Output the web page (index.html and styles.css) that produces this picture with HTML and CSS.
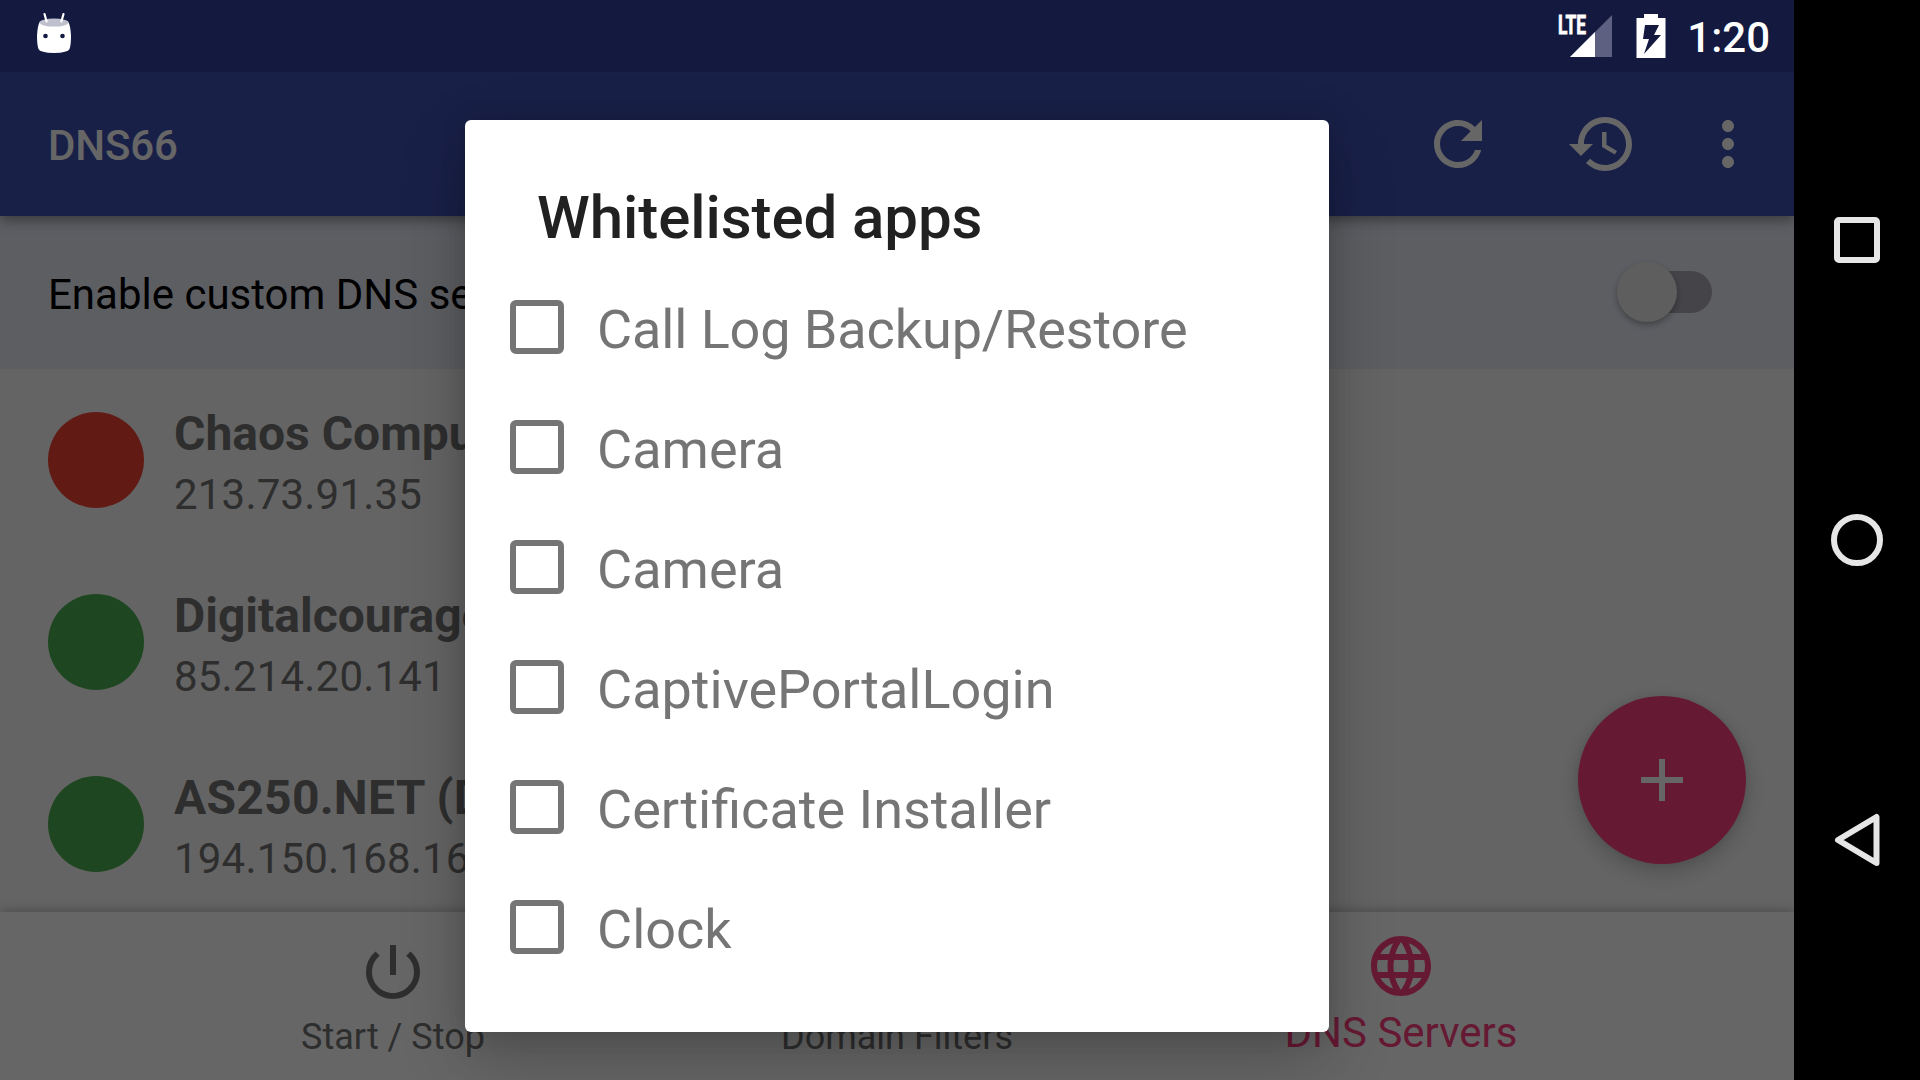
FILE: index.html
```html
<!DOCTYPE html>
<html lang="en">
<head>
<meta charset="utf-8">
<title>DNS66</title>
<link rel="stylesheet" href="styles.css">
</head>
<body>
<div class="device">
  <div class="app">
    <header class="status">
      <svg class="status-head" viewBox="0 0 36 42" width="36" height="42">
        <path d="M4 9.500Q1.500 13 1 24Q1 33 2.500 37Q4 40.700 18 41Q32 40.700 33.500 37Q35 33 35 24Q34.500 13 32 9.500Z" fill="#fff"/>
        <ellipse cx="18" cy="10.600" rx="14.500" ry="4" fill="#bfc0ce"/>
        <path d="M8.500 2L10.600 9.500M27.500 2L25.400 9.500" stroke="#fff" stroke-width="2.200" stroke-linecap="round"/>
        <circle cx="9.500" cy="24" r="2.300" fill="#131940"/>
        <circle cx="26.500" cy="24" r="2.300" fill="#131940"/>
      </svg>
      <div class="status-right">
        <svg class="signal" viewBox="0 0 56 44" width="56" height="44">
          <path d="M54 1V43H12Z" fill="#5d6080"/>
          <path d="M37 18V43H12Z" fill="#fff"/>
          <text class="lte" x="0" y="19.500" textLength="28" lengthAdjust="spacingAndGlyphs">LTE</text>
        </svg>
        <svg class="battery" viewBox="0 0 30 44" width="30" height="44">
          <path fill="#fff" fill-rule="evenodd" d="M8 0H22V4H29.500V44H.500V4H8ZM9 11L7 25H13L8 40L25 21H18L23 11Z"/>
        </svg>
        <span class="clock">1:20</span>
      </div>
    </header>
    <div class="toolbar">
      <h1 class="toolbar-title">DNS66</h1>
      <div class="actions">
        <span class="action"><svg viewBox="0 0 24 24" class="icon"><path d="M17.650 6.350A7.958 7.958 0 0 0 12 4c-4.420 0-7.990 3.580-7.990 8s3.570 8 7.990 8c3.730 0 6.840-2.550 7.730-6h-2.080A5.990 5.990 0 0 1 12 18c-3.310 0-6-2.690-6-6s2.690-6 6-6c1.660 0 3.140.69 4.220 1.780L13 11h7V4l-2.350 2.350z"/></svg></span>
        <span class="action"><svg viewBox="0 0 24 24" class="icon"><path d="M13 3c-4.970 0-9 4.030-9 9H1l3.890 3.890.07.14L9 12H6c0-3.870 3.130-7 7-7s7 3.130 7 7-3.130 7-7 7c-1.930 0-3.680-.79-4.940-2.060l-1.420 1.420A8.954 8.954 0 0 0 13 21c4.970 0 9-4.030 9-9s-4.030-9-9-9zm-1 5v5l4.280 2.540.72-1.210-3.500-2.080V8H12z"/></svg></span>
        <span class="action action-more"><svg viewBox="0 0 24 24" class="icon"><path d="M12 8c1.100 0 2-.9 2-2s-.9-2-2-2-2 .9-2 2 .9 2 2 2zm0 2c-1.100 0-2 .9-2 2s.9 2 2 2 2-.9 2-2-.9-2-2-2zm0 6c-1.100 0-2 .9-2 2s.9 2 2 2 2-.9 2-2-.9-2-2-2z"/></svg></span>
      </div>
    </div>
    <div class="setting">
      <span class="setting-label">Enable custom DNS servers</span>
      <span class="switch"><span class="thumb"></span></span>
    </div>
    <ul class="servers">
      <li class="server"><span class="dot dot-off"></span><div class="server-text"><div class="server-name">Chaos Computer Club</div><div class="server-ip">213.73.91.35</div></div></li>
      <li class="server"><span class="dot"></span><div class="server-text"><div class="server-name">Digitalcourage</div><div class="server-ip">85.214.20.141</div></div></li>
      <li class="server"><span class="dot"></span><div class="server-text"><div class="server-name name-loose">AS250.NET (DE)</div><div class="server-ip">194.150.168.168</div></div></li>
    </ul>
    <button class="fab" type="button"><svg viewBox="0 0 24 24" class="icon"><path d="M19 13h-6v6h-2v-6H5v-2h6V5h2v6h6v2z"/></svg></button>
    <nav class="tabs">
      <div class="tab"><svg viewBox="0 0 24 24" class="icon"><path d="M13 3h-2v10h2V3zm4.830 2.170l-1.420 1.420A6.920 6.920 0 0 1 19 12c0 3.870-3.130 7-7 7s-7-3.130-7-7c0-2.190 1.010-4.140 2.580-5.420L6.170 5.170A8.932 8.932 0 0 0 3 12c0 4.970 4.030 9 9 9s9-4.030 9-9c0-2.740-1.230-5.180-3.170-6.830z"/></svg><span class="tab-label">Start / Stop</span></div>
      <div class="tab"><svg viewBox="0 0 24 24" class="icon"><path d="M3 18h6v-2H3v2zM3 6v2h18V6H3zm0 7h12v-2H3v2z"/></svg><span class="tab-label">Domain Filters</span></div>
      <div class="tab tab-active"><svg viewBox="0 0 24 24" class="icon"><path d="M11.990 2C6.470 2 2 6.480 2 12s4.470 10 9.990 10C17.520 22 22 17.520 22 12S17.520 2 11.990 2zm6.930 6h-2.950c-.32-1.250-.78-2.450-1.380-3.560 1.840.63 3.370 1.910 4.330 3.560zM12 4.040c.83 1.200 1.480 2.530 1.910 3.960h-3.820c.43-1.430 1.080-2.760 1.910-3.960zM4.260 14C4.100 13.360 4 12.690 4 12s.1-1.360.26-2h3.380c-.08.66-.14 1.320-.14 2 0 .68.06 1.340.14 2H4.260zm.82 2h2.950c.32 1.250.78 2.450 1.380 3.560-1.840-.63-3.370-1.900-4.330-3.560zm2.950-8H5.080c.96-1.660 2.490-2.930 4.330-3.560C8.810 5.550 8.350 6.750 8.030 8zM12 19.960c-.83-1.200-1.480-2.530-1.910-3.960h3.820c-.43 1.430-1.080 2.760-1.910 3.960zM14.340 14H9.660c-.09-.66-.16-1.320-.16-2 0-.68.07-1.350.16-2h4.680c.09.65.16 1.320.16 2 0 .68-.07 1.340-.16 2zm.25 5.560c.6-1.110 1.060-2.310 1.380-3.560h2.950c-.96 1.650-2.490 2.930-4.330 3.560zM16.360 14c.08-.66.14-1.320.14-2 0-.68-.06-1.340-.14-2h3.380c.16.64.26 1.310.26 2s-.1 1.360-.26 2h-3.380z"/></svg><span class="tab-label">DNS Servers</span></div>
    </nav>
    <div class="scrim">
      <section class="dialog">
        <h2 class="dialog-title">Whitelisted apps</h2>
        <label class="choice"><span class="box"></span><span class="choice-label label-tight">Call Log Backup/Restore</span></label>
        <label class="choice"><span class="box"></span><span class="choice-label">Camera</span></label>
        <label class="choice"><span class="box"></span><span class="choice-label">Camera</span></label>
        <label class="choice"><span class="box"></span><span class="choice-label">CaptivePortalLogin</span></label>
        <label class="choice"><span class="box"></span><span class="choice-label">Certificate Installer</span></label>
        <label class="choice"><span class="box"></span><span class="choice-label">Clock</span></label>
      </section>
    </div>
  </div>
  <aside class="navbar">
    <svg class="key" viewBox="0 0 60 60"><rect x="10" y="10" width="40" height="40" rx="2"/></svg>
    <svg class="key" viewBox="0 0 60 60"><circle cx="30" cy="30" r="23"/></svg>
    <svg class="key" viewBox="0 0 60 60"><path d="M49.500 7V53L11 30Z"/></svg>
  </aside>
</div>
</body>
</html>
```
FILE: styles.css
```css
* { box-sizing: border-box; }

body {
  margin: 0;
  font-family: Roboto, sans-serif;
  background: #000;
}

.device {
  display: flex;
  width: 1920px;
  height: 1080px;
  overflow: hidden;
}

.app {
  position: relative;
  display: flex;
  flex-direction: column;
  width: 1794px;
  height: 1080px;
  background: #fafafa;
  overflow: hidden;
}

.icon { display: block; width: 72px; height: 72px; fill: currentColor; }

/* Status bar: its icons stay bright while a dialog dims the window */
.status {
  display: flex;
  flex: none;
  justify-content: space-between;
  height: 72px;
  padding: 12px 24px 0 36px;
  background: #303f9f;
}
.status-head, .status-right { position: relative; z-index: 2; }
.status-right { display: flex; align-items: flex-start; color: #fff; }
.signal { margin: 2px 22px 0 0; overflow: visible; }
.battery { margin: 2px 21px 0 0; }
.lte { fill: #fff; stroke: #fff; stroke-width: .8px; font: 700 26px Roboto, sans-serif; }
.clock { padding-top: 1px; font-size: 42px; font-weight: 500; line-height: 50px; }

.toolbar {
  position: relative;
  display: flex;
  flex: none;
  align-items: center;
  justify-content: space-between;
  height: 144px;
  padding: 0 12px 0 48px;
  background: #3f51b5;
  color: #fff;
  box-shadow: 0 4px 12px rgba(0, 0, 0, .4);
  clip-path: inset(0 0 -30px 0);
}
.toolbar-title {
  margin: 0;
  padding-top: 4px;
  font-size: 42px;
  font-weight: 500;
  line-height: 50px;
  letter-spacing: -.1px;
}
.actions { display: flex; }
.action { display: grid; place-items: center; width: 144px; height: 144px; }
.action-more { width: 108px; }

.setting {
  display: flex;
  flex: none;
  align-items: center;
  justify-content: space-between;
  height: 153px;
  padding: 0 82px 0 48px;
  background: #e8eaf6;
}
.setting-label { padding-top: 4px; font-size: 42px; line-height: 50px; color: #000; }
.switch {
  display: flex;
  align-items: center;
  width: 86px;
  height: 42px;
  margin-bottom: 1px;
  border-radius: 21px;
  background: #adabb5;
}
.thumb {
  flex: none;
  width: 60px;
  height: 60px;
  margin-left: -9px;
  border-radius: 50%;
  background: #ebebea;
  box-shadow: 0 3px 6px rgba(0, 0, 0, .3);
}

.servers { flex: 1; margin: 0; padding: 0; list-style: none; min-height: 0; }
.server { display: flex; gap: 30px; height: 182px; padding: 0 48px; }
.dot {
  width: 96px;
  height: 96px;
  margin-top: 43px;
  border-radius: 50%;
  background: #4caf50;
}
.dot-off { background: #f44336; }
.server-text { padding-top: 37px; color: #737373; }
.server-name { font-size: 48px; font-weight: 700; line-height: 56px; }
.name-loose { letter-spacing: .25px; }
.server-ip { margin-top: 8px; font-size: 42px; line-height: 50px; letter-spacing: .2px; }

.fab {
  position: absolute;
  right: 48px;
  bottom: 216px;
  display: grid;
  place-items: center;
  width: 168px;
  height: 168px;
  padding: 0;
  border: 0;
  border-radius: 50%;
  background: #ff4081;
  color: #fff;
  box-shadow: 0 8px 22px rgba(0, 0, 0, .2), 0 0 8px rgba(0, 0, 0, .08);
}

.tabs {
  position: relative;
  display: flex;
  flex: none;
  justify-content: center;
  height: 168px;
  background: #fff;
  box-shadow: 0 0 12px rgba(0, 0, 0, .3);
}
.tab {
  display: flex;
  flex-direction: column;
  align-items: center;
  width: 504px;
  padding-top: 24px;
  color: #737373;
}
.tab-label { margin-top: 8px; font-size: 36px; line-height: 42px; }
.tab-active { padding-top: 18px; color: #ff4081; }
.tab-active .tab-label { margin-top: 6px; font-size: 42px; line-height: 50px; }

.scrim {
  position: absolute;
  inset: 0;
  z-index: 1;
  display: flex;
  justify-content: center;
  align-items: flex-start;
  padding-top: 120px;
  background: rgba(0, 0, 0, .6);
}
.dialog {
  width: 864px;
  height: 912px;
  padding: 60px 45px 0;
  border-radius: 6px;
  background: #fff;
  box-shadow: 0 24px 66px rgba(0, 0, 0, .24), 0 0 24px rgba(0, 0, 0, .12);
}
.dialog-title {
  margin: 0 0 12px;
  padding-left: 27px;
  font-size: 60px;
  font-weight: 500;
  line-height: 75px;
  letter-spacing: -.07px;
  color: #212121;
}
.choice {
  display: flex;
  align-items: center;
  gap: 33px;
  height: 120px;
  font-size: 54px;
  line-height: 64px;
  color: #757575;
}
.choice-label { padding-top: 5px; }
.label-tight { letter-spacing: -.11px; }
.box { width: 54px; height: 54px; border: 6px solid #757575; border-radius: 6px; }

.navbar {
  display: flex;
  flex-direction: column;
  align-items: center;
  justify-content: center;
  gap: 240px;
  width: 126px;
  background: #000;
}
.key {
  width: 60px;
  height: 60px;
  fill: none;
  stroke: #e6e6e6;
  stroke-width: 6;
  stroke-linejoin: round;
}
```
